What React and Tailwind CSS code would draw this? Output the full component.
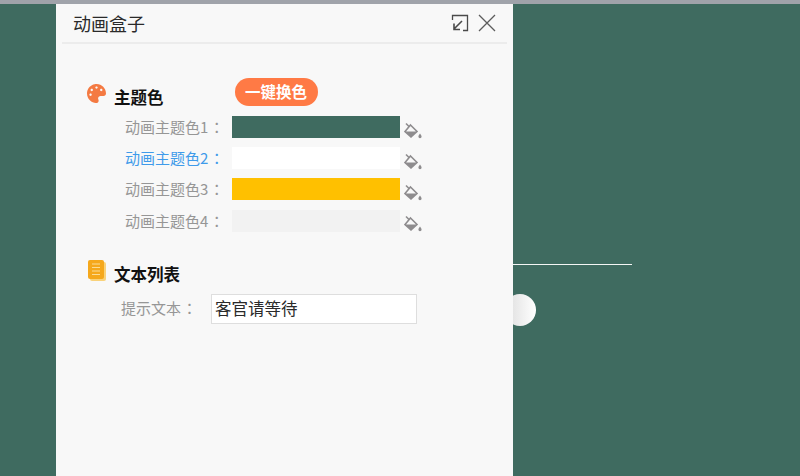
import React from "react";
import { FaPalette } from "react-icons/fa";

const font = { fontFamily: '"Noto Sans CJK SC", "Noto Sans", sans-serif' };

function Bucket() {
  return (
    <svg width="19" height="17" viewBox="0 0 19 17" className="ml-[4px] mt-[6px] shrink-0">
      <path d="M2 1.5L6 5.5" stroke="#8e8c8e" strokeWidth="1.6" fill="none" />
      <path d="M6.5 3L13 9.5L7 15L1 9.5Z" stroke="#8e8c8e" strokeWidth="1.6" fill="#f8f8f8" />
      <path d="M1 9.5H13L7 15Z" fill="#8e8c8e" />
      <path d="M16 11.5C17 13 17.6 13.6 17.6 14.6A1.6 1.6 0 0 1 14.4 14.6C14.4 13.6 15 13 16 11.5Z" fill="#8e8c8e" />
    </svg>
  );
}

function Colon() {
  return <span className="ml-[1px] font-['Noto_Sans_CJK_TC']">：</span>;
}

function Row({ n, color, active }) {
  return (
    <div className="flex items-center h-[22px]">
      <div className={`w-[107px] text-[15px] leading-[22px] whitespace-nowrap ${active ? "text-[#3f9bea]" : "text-[#969696]"}`}>
        动画主题色{n}
        <Colon />
      </div>
      <div className={`w-[168px] h-[22px] ${color}`} />
      <Bucket />
    </div>
  );
}

export default function App() {
  return (
    <div className="relative w-[800px] h-[476px] overflow-hidden bg-[#3f6b60]" style={font}>
      <div className="absolute left-[513px] top-[264px] w-[119px] h-px bg-[#f4f6f5]" />
      <div className="absolute left-[504px] top-[294px] w-[32px] h-[32px] rounded-full bg-gradient-to-r from-[#dcdcdc] to-white" />
      <div className="h-[4px] bg-[#a0a3aa]" />
      <div className="relative ml-[56px] w-[457px] h-[472px] bg-[#f8f8f8]">
        <div className="mx-[6px] h-[40px] flex items-center border-b-2 border-[#ececec] pl-[11px] pr-[11px]">
          <span className="text-[18px] leading-[26px] text-[#2a2a2a] grow">动画盒子</span>
          <svg width="18" height="18" viewBox="0 0 18 18" fill="none" stroke="#4a4a4a" strokeWidth="1.3" className="mr-[9px]">
            <path d="M1.5 6V1.5H16.5V16.5H12" />
            <path d="M11 7L3 15M3 9.5V15.5H9" strokeWidth="1.6" />
          </svg>
          <svg width="18" height="18" viewBox="0 0 18 18" fill="none" stroke="#5c5c5c" strokeWidth="1.3">
            <path d="M1 1L17 17M17 1L1 17" />
          </svg>
        </div>

        <div className="pl-[31px] pt-[34px]">
          <div className="flex items-start h-[38px]">
            <FaPalette className="w-[19px] h-[19px] mt-[6px] text-[#f47a42]" />
            <span className="ml-[8px] mt-[7px] text-[16.5px] leading-[24px] font-bold text-[#111]">主题色</span>
            <button className="ml-[71px] h-[28px] w-[83px] rounded-full bg-[#ff7a45] text-white text-[15.5px] font-bold leading-[24px] pb-[2px] text-center">一键换色</button>
          </div>
          <div className="pl-[38px] flex flex-col gap-[9.2px]">
            <Row n={1} color="bg-[#3f6b60]" />
            <Row n={2} color="bg-white" active />
            <Row n={3} color="bg-[#ffc000]" />
            <Row n={4} color="bg-[#f2f2f2]" />
          </div>

          <div className="flex items-start mt-[24px] h-[38px]">
            <svg width="18" height="21" viewBox="0 0 18 21" className="ml-[1px] mt-[4px]">
              <rect x="2" y="2" width="16" height="19" rx="2" fill="#f9d27a" />
              <rect x="0" y="0" width="16" height="19" rx="2" fill="#f5a81c" />
              <path d="M4 4H12M4 7.5H12M4 11H12M4 14.5H12" stroke="#fbdc96" strokeWidth="1" />
            </svg>
            <span className="ml-[8px] mt-[6px] text-[16.5px] leading-[24px] font-bold text-[#111]">文本列表</span>
          </div>
          <div className="flex items-center pl-[34px] h-[30px]">
            <span className="w-[90px] text-[15px] text-[#969696] whitespace-nowrap">
              提示文本
              <Colon />
            </span>
            <div className="w-[206px] h-[30px] bg-white border border-[#dedede] pl-[3px] text-[16.5px] leading-[26px] text-[#2a2a2a]">客官请等待</div>
          </div>
        </div>
      </div>
    </div>
  );
}
